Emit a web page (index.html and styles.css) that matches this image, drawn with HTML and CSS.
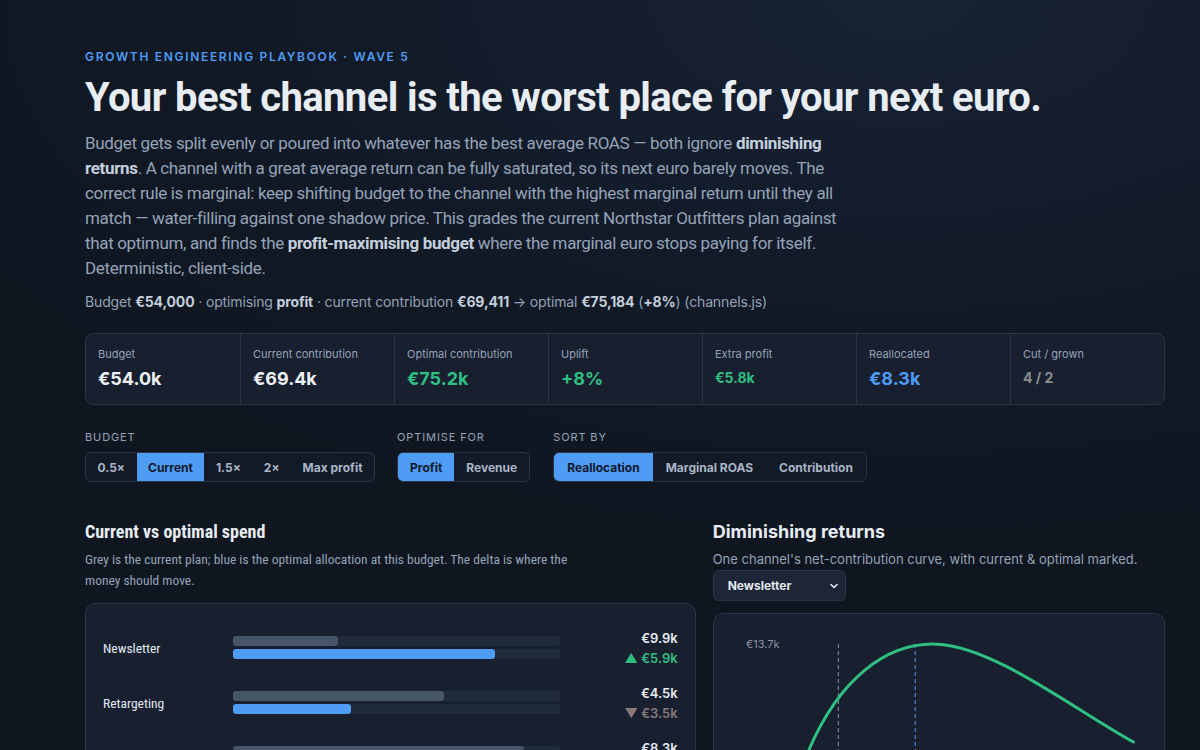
FILE: index.html
```html
<!DOCTYPE html>
<html lang="en">
<head>
    <meta charset="UTF-8">
    <meta name="viewport" content="width=device-width, initial-scale=1.0">
    <title>Marginal budget allocator</title>
    <link rel="stylesheet" href="styles.css">
</head>
<body>
    <div class="container">
        <div class="eyebrow">Growth Engineering Playbook · Wave 5</div>
        <h1>Your best channel is the worst place for your next euro.</h1>
        <p class="lede">
            Budget gets split evenly or poured into whatever has the best average ROAS — both ignore <b>diminishing returns</b>. A channel with a great average return can be fully saturated, so its next euro barely moves. The correct rule is marginal: keep shifting budget to the channel with the highest marginal return until they all match — water-filling against one shadow price. This grades the current Northstar Outfitters plan against that optimum, and finds the <b>profit-maximising budget</b> where the marginal euro stops paying for itself. Deterministic, client-side.
        </p>
        <p class="meta">Budget <b>€54,000</b> · optimising <b>profit</b> · current contribution <b>€69,411</b> → optimal <b>€75,184</b> (<b>+8%</b>) (channels.js)</p>

        <div class="stats">
            <div class="stat">
                <div class="stat-label">Budget</div>
                <div class="stat-value">€54.0k</div>
            </div>
            <div class="stat">
                <div class="stat-label">Current contribution</div>
                <div class="stat-value">€69.4k</div>
            </div>
            <div class="stat">
                <div class="stat-label">Optimal contribution</div>
                <div class="stat-value good">€75.2k</div>
            </div>
            <div class="stat">
                <div class="stat-label">Uplift</div>
                <div class="stat-value good">+8%</div>
            </div>
            <div class="stat">
                <div class="stat-label">Extra profit</div>
                <div class="stat-value small good">€5.8k</div>
            </div>
            <div class="stat">
                <div class="stat-label">Reallocated</div>
                <div class="stat-value accent">€8.3k</div>
            </div>
            <div class="stat">
                <div class="stat-label">Cut / grown</div>
                <div class="stat-value small muted">4 / 2</div>
            </div>
        </div>

        <div class="controls">
            <div class="control budget">
                <div class="control-label">Budget</div>
                <div class="seg">
                    <button>0.5×</button>
                    <button class="active">Current</button>
                    <button>1.5×</button>
                    <button>2×</button>
                    <button>Max profit</button>
                </div>
            </div>
            <div class="control">
                <div class="control-label">Optimise for</div>
                <div class="seg">
                    <button class="active">Profit</button>
                    <button>Revenue</button>
                </div>
            </div>
            <div class="control sort">
                <div class="control-label">Sort by</div>
                <div class="seg">
                    <button class="active">Reallocation</button>
                    <button>Marginal ROAS</button>
                    <button>Contribution</button>
                </div>
            </div>
        </div>

        <div class="panels">
            <section class="spend">
                <h2>Current vs optimal spend</h2>
                <p class="sub">Grey is the current plan; blue is the optimal allocation at this budget. The delta is where the money should move.</p>
                <div class="card bars">
                    <div class="row">
                        <div class="row-name">Newsletter</div>
                        <div class="tracks">
                            <div class="track"><div class="fill cur" style="width: 32%"></div></div>
                            <div class="track"><div class="fill opt" style="width: 80%"></div></div>
                        </div>
                        <div class="row-vals">
                            <div class="v">€9.9k</div>
                            <div class="d up">▲ €5.9k</div>
                        </div>
                    </div>
                    <div class="row">
                        <div class="row-name">Retargeting</div>
                        <div class="tracks">
                            <div class="track"><div class="fill cur" style="width: 64.5%"></div></div>
                            <div class="track"><div class="fill opt" style="width: 36%"></div></div>
                        </div>
                        <div class="row-vals">
                            <div class="v">€4.5k</div>
                            <div class="d down">▼ €3.5k</div>
                        </div>
                    </div>
                    <div class="row">
                        <div class="row-name">Paid Search</div>
                        <div class="tracks">
                            <div class="track"><div class="fill cur" style="width: 89%"></div></div>
                            <div class="track"><div class="fill opt" style="width: 70%"></div></div>
                        </div>
                        <div class="row-vals">
                            <div class="v">€8.3k</div>
                            <div class="d down">▼ €1.2k</div>
                        </div>
                    </div>
                </div>
            </section>
            <section>
                <h2>Diminishing returns</h2>
                <p class="sub">One channel's net-contribution curve, with current &amp; optimal marked.</p>
                <div class="select">
                    <span>Newsletter</span>
                    <svg width="10" height="10" viewBox="0 0 10 10"><path d="M2 3.5 L5 6.5 L8 3.5" fill="none" stroke="#e2e8f0" stroke-width="1.6" stroke-linecap="round" stroke-linejoin="round"/></svg>
                </div>
                <div class="card curve">
                    <svg width="100%" height="300" viewBox="0 0 451 300">
                        <text x="32" y="34" class="axis">€13.7k</text>
                        <line x1="124.5" y1="30" x2="124.5" y2="300" stroke="#8b95a5" stroke-dasharray="4 3"/>
                        <line x1="201.5" y1="30" x2="201.5" y2="300" stroke="#4f9cf5" stroke-dasharray="4 3"/>
                        <path d="M95 136 C125 66, 172 28, 223 30 C280 32, 360 95, 420 128" fill="none" stroke="#2fbf83" stroke-width="3" stroke-linecap="round"/>
                    </svg>
                </div>
            </section>
        </div>
    </div>
</body>
</html>
```

FILE: styles.css
```css
html {
    background: #0f1620;
}
body {
    margin: 0;
    min-height: 100vh;
    font-family: Inter, "Noto Sans", sans-serif;
    color: #e2e8f0;
    background: radial-gradient(ellipse 90% 60% at 75% 0%, #172234 0%, #121a27 55%, #0f1620 100%);
}
.container {
    width: 1080px;
    margin-left: 85px;
    padding-top: 49px;
}
.eyebrow {
    font-size: 12px;
    font-weight: 600;
    letter-spacing: 0.14em;
    text-transform: uppercase;
    color: #4f9cf5;
}
h1 {
    margin: 10px 0 9px;
    font-family: Roboto, Inter, sans-serif;
    font-size: 40px;
    font-weight: 700;
    letter-spacing: -0.015em;
    line-height: 1.2;
    color: #e8edf4;
}
.lede {
    max-width: 765px;
    margin: 0;
    font-family: Roboto, Inter, sans-serif;
    font-size: 17px;
    letter-spacing: -0.02em;
    line-height: 25px;
    color: #94a3b8;
}
.lede b, .meta b {
    color: #c4cfdd;
    font-weight: 700;
}
.meta {
    margin: 12px 0 0;
    font-size: 14px;
    letter-spacing: -0.01em;
    color: #94a3b8;
}

.stats {
    display: grid;
    grid-template-columns: repeat(7, 1fr);
    margin-top: 23px;
    border: 1px solid #2a3545;
    border-radius: 8px;
    background: #182030;
    height: 70px;
}
.stat {
    padding: 13px 12px;
    border-left: 1px solid #2a3545;
}
.stat:first-child {
    border-left: none;
}
.stat-label {
    font-size: 11px;
    color: #94a3b8;
}
.stat-value {
    margin-top: 7px;
    font-size: 18px;
    font-weight: 700;
    color: #eef2f7;
}
.stat-value.small {
    font-size: 14px;
    margin-top: 8px;
}
.good { color: #2fbf83; }
.accent { color: #4f9cf5; }
.muted { color: #8b8c91; }

.controls {
    display: flex;
    gap: 22px;
    margin-top: 25px;
}
.control-label {
    font-size: 11px;
    letter-spacing: 0.08em;
    text-transform: uppercase;
    color: #94a3b8;
    margin-bottom: 8px;
}
.seg {
    display: flex;
    border: 1px solid #2a3545;
    border-radius: 6px;
    overflow: hidden;
    background: #121a26;
}
.seg button {
    border: none;
    background: transparent;
    font-family: inherit;
    font-size: 12px;
    font-weight: 700;
    color: #a9b5c6;
    padding: 0 12px;
    height: 28px;
}
.budget .seg button {
    padding: 0 11.5px;
}
.sort {
    margin-left: 1px;
}
.sort .seg button {
    padding: 0 13px;
}
.seg button.active {
    background: #4f9cf5;
    color: #0f172a;
}

.panels {
    display: grid;
    grid-template-columns: 1.35fr 1fr;
    gap: 17px;
    margin-top: 39px;
}
h2 {
    margin: 0;
    font-size: 18px;
    font-weight: 700;
    color: #e8edf4;
}
.sub {
    margin: 7px 0 0;
    font-size: 13px;
    line-height: 21px;
    color: #94a3b8;
}
/* the spend panel is set in a narrow face */
.spend h2,
.spend .sub,
.spend .row-name {
    font-family: "Liberation Sans Narrow", "Roboto Condensed", Roboto, sans-serif;
}
.spend .sub {
    max-width: 520px;
    font-size: 13.5px;
}
.card {
    border: 1px solid #2a3545;
    border-radius: 10px;
    background: #182030;
}
.bars {
    margin-top: 12px;
    padding: 16px 17px;
}
.row {
    display: grid;
    grid-template-columns: 130px 327px 1fr;
    align-items: center;
    height: 55px;
}
.row-name {
    font-size: 13.5px;
    font-weight: 400;
    color: #e2e8f0;
}
.tracks {
    display: flex;
    flex-direction: column;
    gap: 3px;
}
.track {
    height: 10px;
    border-radius: 3px;
    background: #1f2a3a;
}
.fill {
    height: 100%;
    border-radius: 3px;
}
.fill.cur { background: #475569; }
.fill.opt { background: #4f9cf5; }
.row-vals {
    text-align: right;
    font-size: 13px;
    font-weight: 600;
    line-height: 20px;
}
.v { color: #e8edf4; }
.d.up { color: #2fbf83; }
.d.down { color: #8a7a7a; }

.select {
    display: flex;
    align-items: center;
    justify-content: space-between;
    width: 133px;
    height: 31px;
    margin-top: 0;
    padding: 0 6px 0 14px;
    box-sizing: border-box;
    border: 1px solid #2a3545;
    border-radius: 6px;
    background: #1c2636;
    font-size: 12px;
    font-weight: 700;
    color: #e2e8f0;
}
.curve {
    margin-top: 12px;
    height: 300px;
    overflow: hidden;
}
.curve svg {
    display: block;
}
.axis {
    font-family: Inter, "Noto Sans", sans-serif;
    font-size: 11px;
    fill: #8a94a6;
}
```
